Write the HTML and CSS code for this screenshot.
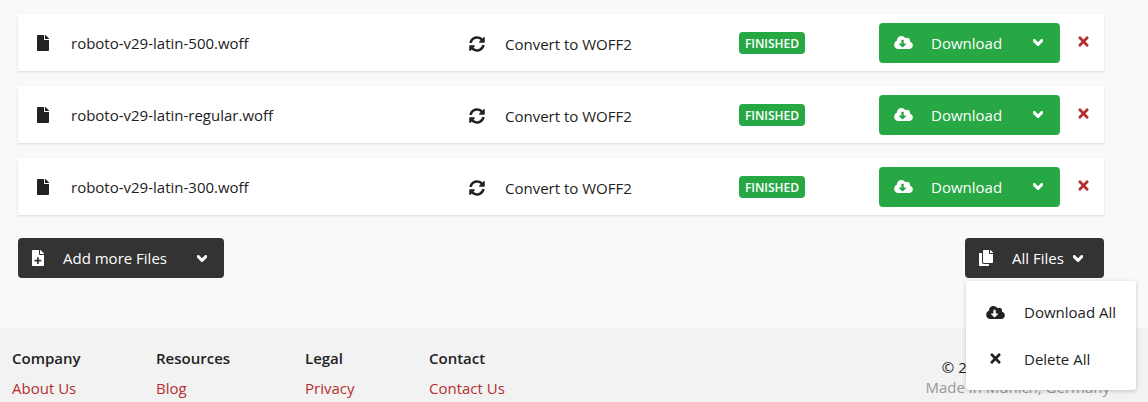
FILE: index.html
```html
<!DOCTYPE html>
<html lang="en">
<head>
<meta charset="utf-8">
<title>Font Converter</title>
<link rel="stylesheet" href="styles.css">
</head>
<body>
<svg class="defs" width="0" height="0" aria-hidden="true">
  <symbol id="i-file" viewBox="0 0 384 512"><path d="M224 136V0H24C10.7 0 0 10.7 0 24v464c0 13.3 10.7 24 24 24h336c13.3 0 24-10.7 24-24V160H248c-13.2 0-24-10.8-24-24zm160-14.1v6.1H256V0h6.1c6.4 0 12.5 2.5 17 7l97.9 98c4.5 4.5 7 10.6 7 16.9z"/></symbol>
  <symbol id="i-file-plus" viewBox="0 0 384 512"><path d="M224 136V0H24C10.7 0 0 10.7 0 24v464c0 13.3 10.7 24 24 24h336c13.3 0 24-10.7 24-24V160H248c-13.2 0-24-10.8-24-24zm72 184v32c0 6.6-5.4 12-12 12h-68v68c0 6.6-5.4 12-12 12h-32c-6.6 0-12-5.4-12-12v-68h-68c-6.6 0-12-5.4-12-12v-32c0-6.6 5.4-12 12-12h68v-68c0-6.6 5.4-12 12-12h32c6.6 0 12 5.4 12 12v68h68c6.6 0 12 5.4 12 12zm88-198.1v6.1H256V0h6.1c6.4 0 12.5 2.5 17 7l97.9 98c4.5 4.5 7 10.6 7 16.9z"/></symbol>
  <symbol id="i-sync" viewBox="0 0 512 512"><path d="M370.72 133.28C339.458 104.008 298.888 87.962 255.848 88c-77.458.068-144.328 53.178-162.791 126.85-1.344 5.363-6.122 9.15-11.651 9.15H24.103c-7.498 0-13.194-6.807-11.807-14.176C33.933 94.924 134.813 8 256 8c66.448 0 126.791 26.136 171.315 68.685L463.03 40.97C478.149 25.851 504 36.559 504 57.941V192c0 13.255-10.745 24-24 24H345.941c-21.382 0-32.09-25.851-16.971-40.971l41.75-41.749zM32 296h134.059c21.382 0 32.09 25.851 16.971 40.971l-41.75 41.75c31.262 29.273 71.835 45.319 114.876 45.28 77.418-.07 144.315-53.144 162.787-126.849 1.344-5.363 6.122-9.15 11.651-9.15h57.304c7.498 0 13.194 6.807 11.807 14.176C478.067 417.076 377.187 504 256 504c-66.448 0-126.791-26.136-171.315-68.685L48.97 471.03C33.851 486.149 8 475.441 8 454.059V320c0-13.255 10.745-24 24-24z"/></symbol>
  <symbol id="i-cloud" viewBox="0 0 640 512"><path d="M537.6 226.6c4.1-10.7 6.4-22.4 6.4-34.6 0-53-43-96-96-96-19.7 0-38.1 6-53.3 16.2C367 64.2 315.3 32 256 32c-88.4 0-160 71.6-160 160 0 2.7.1 5.4.2 8.1C40.2 219.8 0 273.2 0 336c0 79.5 64.5 144 144 144h368c70.7 0 128-57.3 128-128 0-61.9-44-113.6-102.4-125.4zm-132.9 88.7L299.3 420.7c-6.2 6.2-16.4 6.2-22.6 0L171.3 315.3c-10.1-10.1-2.9-27.3 11.3-27.3H248V176c0-8.8 7.2-16 16-16h48c8.8 0 16 7.2 16 16v112h65.4c14.2 0 21.4 17.2 11.3 27.3z"/></symbol>
  <symbol id="i-chev" viewBox="0 0 448 512"><path d="M207.029 381.476L12.686 187.132c-9.373-9.373-9.373-24.569 0-33.941l22.667-22.667c9.357-9.357 24.522-9.375 33.901-.04L224 284.505l154.745-154.021c9.379-9.335 24.544-9.317 33.901.04l22.667 22.667c9.373 9.373 9.373 24.569 0 33.941L240.971 381.476c-9.373 9.372-24.569 9.372-33.942 0z"/></symbol>
  <symbol id="i-times" viewBox="0 0 352 512"><path d="M242.72 256l100.07-100.07c12.28-12.28 12.28-32.19 0-44.48l-22.24-22.24c-12.28-12.28-32.19-12.28-44.48 0L176 189.28 75.93 89.21c-12.28-12.28-32.19-12.28-44.48 0L9.21 111.45c-12.28 12.28-12.28 32.19 0 44.48L109.28 256 9.21 356.07c-12.28 12.28-12.28 32.19 0 44.48l22.24 22.24c12.28 12.28 32.2 12.28 44.48 0L176 322.72l100.07 100.07c12.28 12.28 32.2 12.28 44.48 0l22.24-22.24c12.28-12.28 12.28-32.19 0-44.48L242.72 256z"/></symbol>
  <symbol id="i-copy" viewBox="0 0 448 512"><path d="M320 448v40c0 13.255-10.745 24-24 24H24c-13.255 0-24-10.745-24-24V120c0-13.255 10.745-24 24-24h72v296c0 30.879 25.121 56 56 56h168zm0-344V0H152c-13.255 0-24 10.745-24 24v368c0 13.255 10.745 24 24 24h272c13.255 0 24-10.745 24-24V128H344c-13.2 0-24-10.8-24-24zm120.971-31.029L375.029 7.029A24 24 0 0 0 358.059 0H352v96h96v-6.059a24 24 0 0 0-7.029-16.97z"/></symbol>
</svg>

<main class="content">
  <ul class="files">
    <li class="file">
      <svg class="ic ic-file"><use href="#i-file"/></svg>
      <span class="file-name">roboto-v29-latin-500.woff</span>
      <svg class="ic ic-sync"><use href="#i-sync"/></svg>
      <span class="convert">Convert to WOFF2</span>
      <span class="badge">FINISHED</span>
      <button class="btn btn-green btn-dl"><svg class="ic ic-cloud"><use href="#i-cloud"/></svg><span class="dl-label">Download</span><svg class="ic ic-chev"><use href="#i-chev"/></svg></button>
      <svg class="ic ic-del"><use href="#i-times"/></svg>
    </li>
    <li class="file">
      <svg class="ic ic-file"><use href="#i-file"/></svg>
      <span class="file-name">roboto-v29-latin-regular.woff</span>
      <svg class="ic ic-sync"><use href="#i-sync"/></svg>
      <span class="convert">Convert to WOFF2</span>
      <span class="badge">FINISHED</span>
      <button class="btn btn-green btn-dl"><svg class="ic ic-cloud"><use href="#i-cloud"/></svg><span class="dl-label">Download</span><svg class="ic ic-chev"><use href="#i-chev"/></svg></button>
      <svg class="ic ic-del"><use href="#i-times"/></svg>
    </li>
    <li class="file">
      <svg class="ic ic-file"><use href="#i-file"/></svg>
      <span class="file-name">roboto-v29-latin-300.woff</span>
      <svg class="ic ic-sync"><use href="#i-sync"/></svg>
      <span class="convert">Convert to WOFF2</span>
      <span class="badge">FINISHED</span>
      <button class="btn btn-green btn-dl"><svg class="ic ic-cloud"><use href="#i-cloud"/></svg><span class="dl-label">Download</span><svg class="ic ic-chev"><use href="#i-chev"/></svg></button>
      <svg class="ic ic-del"><use href="#i-times"/></svg>
    </li>
  </ul>
  <div class="actions">
    <button class="btn btn-dark btn-add"><svg class="ic ic-plus"><use href="#i-file-plus"/></svg><span class="add-label">Add more Files</span><svg class="ic ic-chev"><use href="#i-chev"/></svg></button>
    <div class="all">
      <button class="btn btn-dark btn-all"><svg class="ic ic-copy"><use href="#i-copy"/></svg><span class="all-label">All Files</span><svg class="ic ic-chev"><use href="#i-chev"/></svg></button>
      <div class="menu">
        <a class="menu-item"><span class="menu-ic"><svg class="ic ic-cloud-dark"><use href="#i-cloud"/></svg></span>Download All</a>
        <a class="menu-item"><span class="menu-ic"><svg class="ic ic-times-dark"><use href="#i-times"/></svg></span>Delete All</a>
      </div>
    </div>
  </div>
</main>

<footer class="footer">
  <div class="col col-company"><h4>Company</h4><a>About Us</a></div>
  <div class="col col-resources"><h4>Resources</h4><a>Blog</a></div>
  <div class="col col-legal"><h4>Legal</h4><a>Privacy</a></div>
  <div class="col col-contact"><h4>Contact</h4><a>Contact Us</a></div>
  <div class="copy"><p class="copy-main">© 2021 Font Converts</p><p class="copy-sub">Made in Munich, Germany</p></div>
</footer>
</body>
</html>
```
FILE: styles.css
```css
* { box-sizing: border-box; }
html, body { margin: 0; height: 402px; overflow: hidden; }
body {
  background: #f9f9f9;
  color: #222;
  font-family: "Open Sans", "Liberation Sans", sans-serif;
  font-size: 15px;
  line-height: 20px;
}
.defs { position: absolute; }
.ic { display: block; fill: currentColor; flex: none; }

.content { padding: 14px 44px 0 18px; height: 328px; }
.files { list-style: none; margin: 0; padding: 0; display: flex; flex-direction: column; gap: 15px; }
.file {
  display: flex;
  align-items: center;
  height: 57px;
  padding: 2px 0 0 19px;
  background: #fff;
  box-shadow: 0 1px 2px rgba(0, 0, 0, .12);
}
.ic-file { width: 12px; height: 16px; margin-top: -2px; color: #222; }
.file-name { width: 398px; margin: -1px 0 0 22px; }
.ic-sync { width: 16px; height: 16px; color: #222; }
.convert { width: 234px; margin-left: 20px; }
.badge {
  width: 66px;
  height: 22px;
  margin-top: -1px;
  border-radius: 4px;
  background: #28a745;
  color: #fff;
  font-size: 12px;
  font-weight: 600;
  line-height: 23px;
  text-align: center;
}
.btn {
  display: flex;
  align-items: center;
  height: 40px;
  padding: 0;
  border: 0;
  border-radius: 4px;
  color: #fff;
  font: inherit;
  font-weight: 500;
}
.btn-green { background: #28a745; }
.btn-dark { background: #333; }
.btn-dl { width: 181px; margin: -2px 0 0 74px; padding-left: 15px; }
.ic-cloud { width: 19px; height: 15px; }
.dl-label { margin-left: 18px; width: 102px; text-align: left; }
.ic-chev { width: 10px; height: 11px; stroke: currentColor; stroke-width: 60; overflow: visible; }
.ic-del { width: 11px; height: 15px; margin: -4px 0 0 18px; color: #b52f2f; }

.actions { display: flex; justify-content: space-between; margin-top: 23px; }
.btn-add { width: 206px; padding-left: 14px; }
.ic-plus { width: 12px; height: 16px; }
.add-label { margin-left: 19px; width: 134px; text-align: left; }
.all { position: relative; }
.btn-all { width: 139px; padding-left: 14px; }
.ic-copy { width: 14px; height: 16px; }
.all-label { margin-left: 19px; width: 61px; text-align: left; }
.menu {
  position: absolute;
  top: 43px;
  left: 1px;
  z-index: 2;
  width: 170px;
  height: 109px;
  padding: 8px 0;
  background: #fff;
  border-radius: 3px;
  box-shadow: 0 1px 4px rgba(0, 0, 0, .2);
}
.menu-item { display: flex; align-items: center; height: 46.5px; color: #222; }
.menu-ic { display: flex; justify-content: center; width: 58px; }
.ic-cloud-dark { width: 19px; height: 15px; }
.ic-times-dark { width: 11px; height: 15px; }

.footer { display: flex; height: 74px; padding: 20px 38px 0 12px; background: #f2f2f2; }
.col h4 { margin: 0 0 10px; font-size: 15px; font-weight: 600; line-height: 20px; color: #222; }
.col a { color: #b52f2f; }
.col-company { width: 144px; }
.col-resources { width: 149px; }
.col-legal { width: 124px; }
.copy { margin-left: auto; padding-top: 9px; text-align: center; }
.copy p { margin: 0; }
.copy-main { margin-bottom: 3px; color: #222; }
.copy-sub { color: #999; }
```
